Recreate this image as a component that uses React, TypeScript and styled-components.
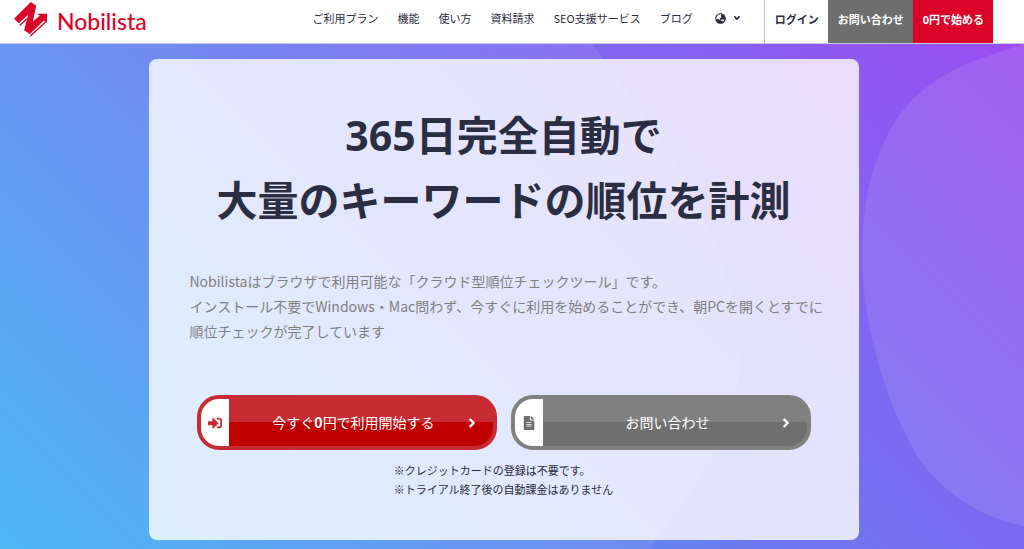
import React from "react";
import styled, { createGlobalStyle } from "styled-components";
import { FaAngleDown, FaChevronRight, FaFileAlt, FaGlobeAsia, FaSignInAlt } from "react-icons/fa";

const GlobalStyle = createGlobalStyle`
  * { box-sizing: border-box; }
  body {
    margin: 0;
    color: #2b2d42;
    font-family: "Noto Sans CJK JP", sans-serif;
  }
  h1, p { margin: 0; }
  a { color: inherit; text-decoration: none; }
`;

const Page = styled.div`
  display: flex;
  flex-direction: column;
  min-height: 100vh;
`;

const Header = styled.header`
  display: flex;
  align-items: stretch;
  height: 44px;
  padding: 0 31px 0 14px;
  border-bottom: 1px solid #c9cadb;
  background: #fff;
`;

const Logo = styled.a`
  display: flex;
  align-items: flex-start;
  gap: 10px;
  margin-right: auto;
  padding-top: 2px;
  color: #dc0329;
  font-family: Lato, sans-serif;
  font-size: 23px;
  font-weight: 500;
  line-height: 38px;
`;

const Nav = styled.nav`
  display: flex;
  align-items: center;
  gap: 19px;
  padding: 0 22px 7px 0;
  font-size: 11px;
  line-height: 16px;
  white-space: nowrap;
`;

const LanguageButton = styled.button`
  display: flex;
  align-items: center;
  gap: 6px;
  margin-left: 3px;
  padding: 0;
  border: 0;
  background: none;
  color: inherit;
`;

const Actions = styled.div`
  display: flex;
  border-left: 1px solid #bfc4d6;
`;

const Action = styled.a<{ $bg?: string }>`
  display: flex;
  align-items: center;
  padding: 0 9px 5px 10px;
  background: ${({ $bg }) => $bg ?? "transparent"};
  color: ${({ $bg }) => ($bg ? "#fff" : "inherit")};
  font-family: "Noto Sans", "Noto Sans CJK JP", sans-serif;
  font-size: 11px;
  font-weight: 700;
  white-space: nowrap;
`;

const Hero = styled.main`
  position: relative;
  flex: 1;
  padding: 15px 17px 9px 0;
  background: linear-gradient(45deg, #3eb2f3 0%, #6c79f1 50%, #9a4df1 100%);
`;

const Shapes = styled.svg`
  position: absolute;
  inset: 0;
  width: 100%;
  height: 100%;
`;

const Card = styled.section`
  position: relative;
  max-width: 710px;
  margin: 0 auto;
  padding: 44px 41px 41px;
  border-radius: 8px;
  background: rgba(255, 255, 255, 0.8);
`;

const Title = styled.h1`
  font-family: "Noto Sans", "Noto Sans CJK JP", sans-serif;
  font-size: 41px;
  font-weight: 700;
  line-height: 65px;
  text-align: center;
`;

const Lead = styled.p`
  margin: 36px -10px 0 0;
  color: #808080;
  font-size: 14px;
  line-height: 25px;
`;

const Buttons = styled.div`
  display: flex;
  justify-content: center;
  gap: 14px;
  margin-top: 51px;
`;

const Cta = styled.a<{ $light: string; $dark: string }>`
  display: flex;
  align-items: stretch;
  flex: 0 1 300px;
  height: 55px;
  border: 4px solid ${({ $light }) => $light};
  border-radius: 22px;
  overflow: hidden;
  background:
    linear-gradient(transparent 50%, ${({ $dark }) => $dark} 50%) padding-box,
    linear-gradient(${({ $light }) => `${$light}, ${$light}`}) border-box;
  color: #fff;
  font-size: 14px;
`;

const CtaIcon = styled.span<{ $color: string }>`
  display: grid;
  place-items: center;
  width: 28px;
  background: #fff;
  color: ${({ $color }) => $color};
`;

const CtaLabel = styled.span`
  flex: 1;
  align-self: center;
  padding: 0 0 2px 12px;
  text-align: center;
`;

const CtaArrow = styled.span`
  display: grid;
  place-items: center;
  padding-right: 16px;

  svg {
    stroke: currentColor;
    stroke-width: 50px;
  }
`;

const Notes = styled.p`
  width: fit-content;
  margin: 11px auto 0;
  font-size: 11px;
  line-height: 19px;
`;

const links = ["ご利用プラン", "機能", "使い方", "資料請求", "SEO支援サービス", "ブログ"];

export default function App() {
  return (
    <Page>
      <GlobalStyle />
      <Header>
        <Logo href="#">
          <svg width="33" height="35" viewBox="0 0 98 104" aria-hidden="true">
            <path fill="#dc0329" d="M0 50 50 0 66 11 56 58 77 40 67 35H98V63L89 55 47 95 30 84 42 38 14 63Z" />
            <path fill="none" stroke="#dc0329" strokeWidth="4" d="M17 70 38 50M48 102 93 60" />
          </svg>
          Nobilista
        </Logo>
        <Nav>
          {links.map((link) => (
            <a href="#" key={link}>{link}</a>
          ))}
          <LanguageButton aria-label="言語">
            <FaGlobeAsia size={11} />
            <FaAngleDown size={10} />
          </LanguageButton>
        </Nav>
        <Actions>
          <Action href="#">ログイン</Action>
          <Action href="#" $bg="#6e6e6e">お問い合わせ</Action>
          <Action href="#" $bg="#dc0329">0円で始める</Action>
        </Actions>
      </Header>
      <Hero>
        <Shapes viewBox="0 0 1024 505" preserveAspectRatio="none" aria-hidden="true">
          <path fill="#fff" fillOpacity="0.08" d="M0 0H592C640 65 735 180 739 310C741 390 690 450 650 505H0Z" />
          <path fill="#fff" fillOpacity="0.1" d="M1024 0C975 16 925 30 895 78C872 115 862 160 862 209C862 275 882 345 909 397C930 440 975 473 1024 482Z" />
        </Shapes>
        <Card>
          <Title>365日完全自動で<br />大量のキーワードの順位を計測</Title>
          <Lead>
            Nobilistaはブラウザで利用可能な「クラウド型順位チェックツール」です。<br />
            インストール不要でWindows・Mac問わず、今すぐに利用を始めることができ、朝PCを開くとすでに順位チェックが完了しています
          </Lead>
          <Buttons>
            <Cta href="#" $light="#c72c33" $dark="#c00000">
              <CtaIcon $color="#c72c33"><FaSignInAlt size={14} /></CtaIcon>
              <CtaLabel>今すぐ<b>0</b>円で利用開始する</CtaLabel>
              <CtaArrow><FaChevronRight size={10} /></CtaArrow>
            </Cta>
            <Cta href="#" $light="#808080" $dark="#6f6f6f">
              <CtaIcon $color="#6f6f6f"><FaFileAlt size={14} /></CtaIcon>
              <CtaLabel>お問い合わせ</CtaLabel>
              <CtaArrow><FaChevronRight size={10} /></CtaArrow>
            </Cta>
          </Buttons>
          <Notes>※クレジットカードの登録は不要です。<br />※トライアル終了後の自動課金はありません</Notes>
        </Card>
      </Hero>
    </Page>
  );
}
